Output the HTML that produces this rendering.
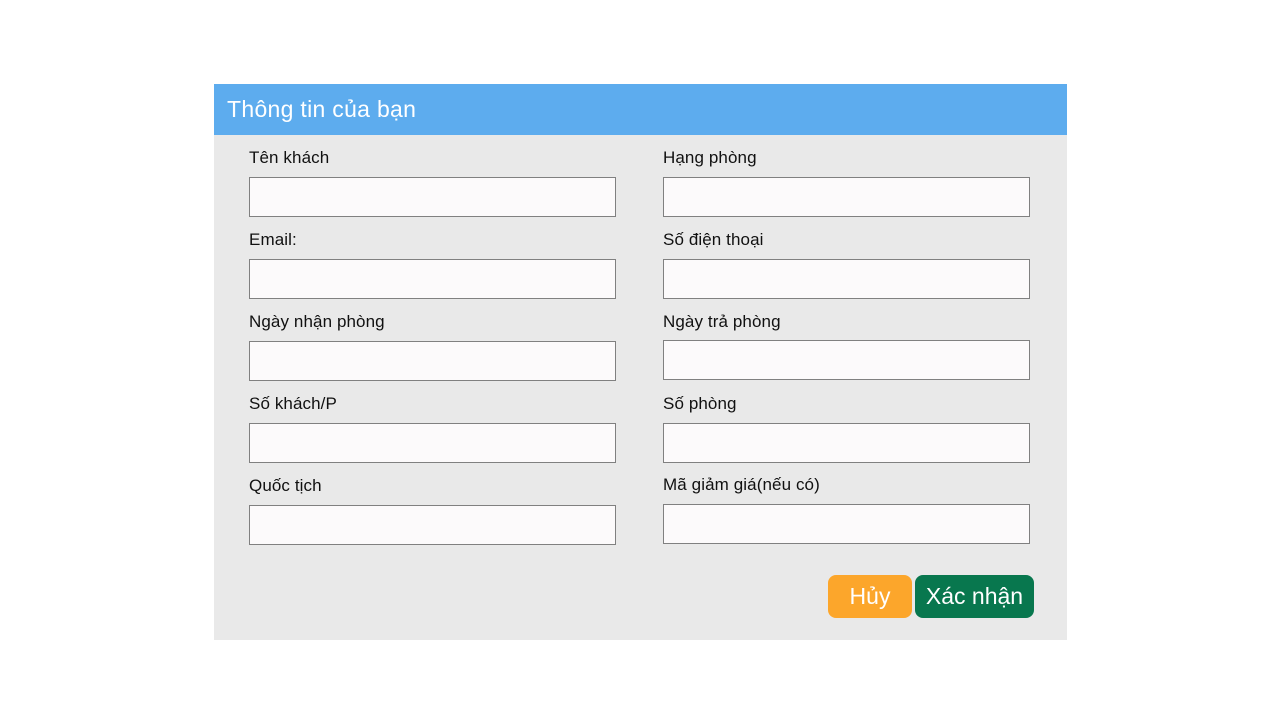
<!DOCTYPE html>
<html><head><meta charset="utf-8"><style>
body{margin:0;width:1280px;height:720px;background:#fff;font-family:"Liberation Sans","DejaVu Sans",sans-serif;position:relative;overflow:hidden}
.panel{position:absolute;left:214px;top:84px;width:853px;height:556px;background:#e9e9e9}
.hdr{position:absolute;left:214px;top:84px;width:853px;height:51px;background:#5dacee;color:#fff;font-size:23px;line-height:51px;box-sizing:border-box;padding-left:13px;letter-spacing:0.3px}
.lbl{position:absolute;font-size:17px;color:#111;line-height:20px;letter-spacing:0.1px}
.in{position:absolute;width:367px;height:40px;box-sizing:border-box;border:1px solid #808080;background:#fcfafb}
.btn{position:absolute;top:575px;height:43px;border-radius:8px;color:#fff;font-size:23px;line-height:43px;text-align:center}
</style></head><body>
<div class="panel"></div>
<div class="hdr">Thông tin của bạn</div>
<div class="lbl" style="left:249px;top:148px">Tên khách</div>
<div class="in" style="left:249px;top:177px"></div>
<div class="lbl" style="left:663px;top:148px">Hạng phòng</div>
<div class="in" style="left:663px;top:177px"></div>
<div class="lbl" style="left:249px;top:230px">Email:</div>
<div class="in" style="left:249px;top:259px"></div>
<div class="lbl" style="left:663px;top:230px">Số điện thoại</div>
<div class="in" style="left:663px;top:259px"></div>
<div class="lbl" style="left:249px;top:312px">Ngày nhận phòng</div>
<div class="in" style="left:249px;top:341px"></div>
<div class="lbl" style="left:663px;top:312px">Ngày trả phòng</div>
<div class="in" style="left:663px;top:340px"></div>
<div class="lbl" style="left:249px;top:394px">Số khách/P</div>
<div class="in" style="left:249px;top:423px"></div>
<div class="lbl" style="left:663px;top:394px">Số phòng</div>
<div class="in" style="left:663px;top:423px"></div>
<div class="lbl" style="left:249px;top:476px">Quốc tịch</div>
<div class="in" style="left:249px;top:505px"></div>
<div class="lbl" style="left:663px;top:475px">Mã giảm giá(nếu có)</div>
<div class="in" style="left:663px;top:504px"></div>
<div class="btn" style="left:828px;width:84px;background:#fca62b">Hủy</div>
<div class="btn" style="left:915px;width:119px;background:#08774e">Xác nhận</div>
</body></html>
